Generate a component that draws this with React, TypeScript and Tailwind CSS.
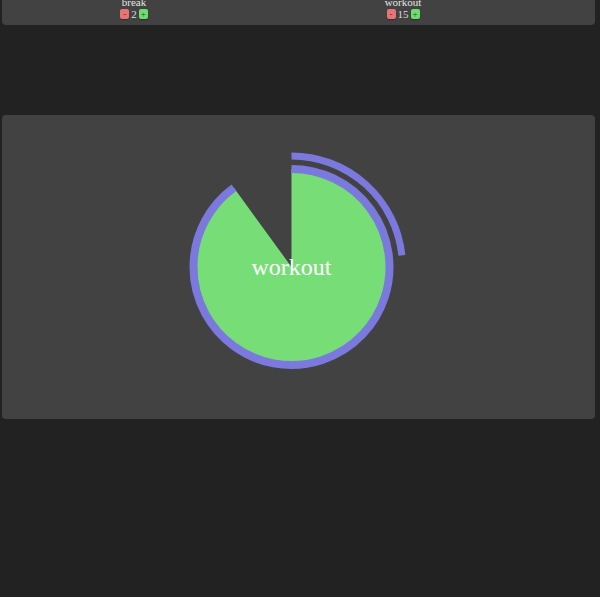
const CX = 112.5;
const CY = 120;

function point(r: number, deg: number) {
  const a = (deg * Math.PI) / 180;
  return [CX + r * Math.sin(a), CY - r * Math.cos(a)];
}

function arc(r: number, deg: number) {
  const [x, y] = point(r, deg);
  const large = deg > 180 ? 1 : 0;
  return `M ${CX} ${CY - r} A ${r} ${r} 0 ${large} 1 ${x} ${y}`;
}

function pie(r: number, deg: number) {
  const [x, y] = point(r, deg);
  const large = deg > 180 ? 1 : 0;
  return `M ${CX} ${CY} L ${CX} ${CY - r} A ${r} ${r} 0 ${large} 1 ${x} ${y} Z`;
}

function Counter({ label, value }: { label: string; value: number }) {
  return (
    <div className="flex flex-col items-center">
      <span className="text-[11px] leading-[11px] text-[#e6e6e6]">{label}</span>
      <div className="mt-[1px] flex h-[10px] items-center gap-[2px]">
        <button className="flex h-[10px] w-[9px] items-center justify-center rounded-[2px] bg-[#e87373] text-[9px] leading-none text-[#6e2424] shadow-[0_1px_1px_rgb(0_0_0_/_30%)]">
          -
        </button>
        <span className="text-[11px] leading-[10px] text-[#dcdcdc]">{value}</span>
        <button className="flex h-[10px] w-[9px] items-center justify-center rounded-[2px] bg-[#6fdc6f] text-[9px] leading-none text-[#1f521f] shadow-[0_1px_1px_rgb(0_0_0_/_30%)]">
          +
        </button>
      </div>
    </div>
  );
}

export default function App() {
  return (
    <div className="min-h-[600px] bg-[#222222] font-['Liberation_Serif',serif]">
      <div className="mt-[-3px] ml-[2px] mr-[5px] grid grid-cols-[264px_274px] rounded-b-[4px] bg-[#424242] pb-[6px]">
        <Counter label="break" value={2} />
        <Counter label="workout" value={15} />
      </div>
      <div className="mt-[90px] ml-[2px] mr-[5px] flex h-[304px] items-center justify-center rounded-[4px] bg-[#424242]">
        <svg width="240" height="240" viewBox="0 0 240 240">
          <path d={pie(98, 324)} fill="#77dd77" />
          <path d={arc(98, 324)} fill="none" stroke="#7b78de" strokeWidth="8" />
          <path d={arc(111, 84)} fill="none" stroke="#7b78de" strokeWidth="7" />
          <text
            x={CX}
            y={CY + 8}
            textAnchor="middle"
            fill="#ffffff"
            fontSize="24"
            fontFamily="Liberation Serif, serif"
          >
            workout
          </text>
        </svg>
      </div>
    </div>
  );
}
